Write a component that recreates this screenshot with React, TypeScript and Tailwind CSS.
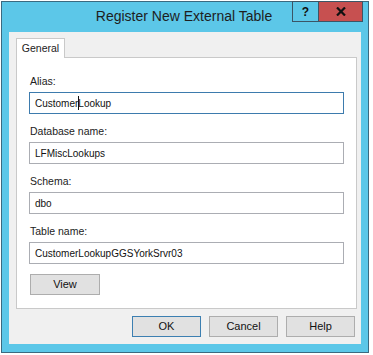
import React from "react";

const font = { fontFamily: '"Liberation Sans", Arial, sans-serif' };

function Field({ label, value, top, focused, caret }: { label: string; value: string; top: string; focused?: boolean; caret?: boolean }) {
  return (
    <div className={`flex flex-col ${top}`}>
      <div className="text-[10.5px] leading-[14px] text-[#222] ml-[13px]">{label}</div>
      <div
        className={`ml-[12px] mt-[4px] w-[315px] h-[22px] bg-white border flex items-center pl-[5px] text-[10px] text-[#111] ${
          focused ? "border-[#3d7bad]" : "border-[#abadb3]"
        }`}
      >
        {caret ? (
          <>
            <span>Customer</span>
            <span className="inline-block w-[1px] h-[14px] bg-[#111] mr-[-1px]" />
            <span>Lookup</span>
          </>
        ) : (
          <span>{value}</span>
        )}
      </div>
    </div>
  );
}

function Btn({ label, def, w }: { label: string; def?: boolean; w: string }) {
  return (
    <div
      className={`${w} h-[21px] flex items-center justify-center bg-[#e1e1e1] border text-[11px] text-[#111] ${
        def ? "border-[#3c7fb1]" : "border-[#adadad]"
      }`}
    >
      {label}
    </div>
  );
}

export default function App() {
  return (
    <div className="w-[373px] h-[355px] bg-white" style={font}>
      <div className="ml-[1px] pt-[1px]">
        <div className="w-[368px] h-[352px] border border-[#3b6a80] bg-[#5cc7e8] flex flex-col">
          <div className="relative h-[30px] flex items-center justify-center">
            <span className="text-[14px] text-[#1e1e1e] mt-[-1px] mr-[2px]">Register New External Table</span>
            <div className="absolute left-[290px] top-[-1px] flex">
              <div className="w-[27px] h-[21px] border border-[#3b5566] flex items-center justify-center text-[12px] font-bold text-[#111]">
                ?
              </div>
              <div className="w-[44px] h-[21px] bg-[#c75050] border border-[#3b5566] border-l-0 flex items-center justify-center">
                <svg width="10" height="9" viewBox="0 0 10 9">
                  <path d="M1 0.5 L9 8.5 M9 0.5 L1 8.5" stroke="#111" strokeWidth="2.2" />
                </svg>
              </div>
            </div>
          </div>
          <div className="mx-[7px] mb-[8px] flex-1 bg-[#f0f0f0] flex flex-col">
            <div className="ml-[7px] mt-[6px] w-[49px] h-[20px] bg-white border border-[#c9c9c9] border-b-0 flex items-center justify-center text-[10.5px] text-[#222] relative z-10 mb-[-1px]">
              General
            </div>
            <div className="ml-[7px] w-[341px] h-[252px] bg-white border border-[#c9c9c9] flex flex-col">
              <Field label="Alias:" value="CustomerLookup" top="mt-[16px]" focused caret />
              <Field label="Database name:" value="LFMiscLookups" top="mt-[10px]" />
              <Field label="Schema:" value="dbo" top="mt-[10px]" />
              <Field label="Table name:" value="CustomerLookupGGSYorkSrvr03" top="mt-[10px]" />
              <div className="ml-[13px] mt-[10px]">
                <Btn label="View" w="w-[70px]" />
              </div>
            </div>
            <div className="flex justify-end gap-[8px] mr-[6px] mt-[7px]">
              <Btn label="OK" def w="w-[69px]" />
              <Btn label="Cancel" w="w-[69px]" />
              <Btn label="Help" w="w-[69px]" />
            </div>
          </div>
        </div>
      </div>
    </div>
  );
}
